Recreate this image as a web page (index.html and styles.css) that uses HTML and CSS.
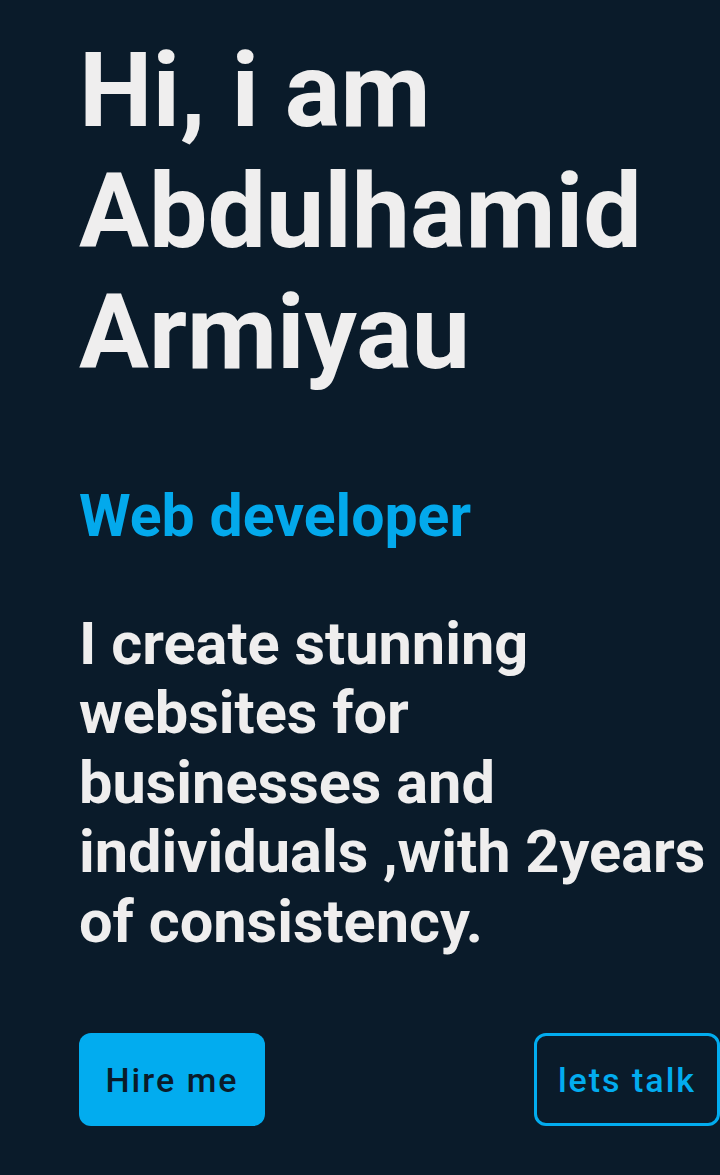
FILE: index.html
```html
<!DOCTYPE html>
<html lang="en">
<head>
<meta charset="utf-8">
<title>Abdulhamid Armiyau</title>
<link rel="stylesheet" href="styles.css">
</head>
<body>
<main class="hero">
  <h1 class="hero-title">Hi, i am Abdulhamid Armiyau</h1>
  <h2 class="hero-role">Web developer</h2>
  <p class="hero-text">I create stunning websites for businesses and individuals ,with 2years of consistency.</p>
  <div class="hero-actions">
    <a class="btn btn-primary" href="#">Hire me</a>
    <a class="btn btn-outline" href="#">lets talk</a>
  </div>
</main>
</body>
</html>
```
FILE: styles.css
```css
html, body {
  margin: 0;
  padding: 0;
  background: #0a1b2a;
}
body {
  font-family: Roboto, "Liberation Sans", sans-serif;
  color: #efeeee;
  overflow: hidden;
}
.hero {
  padding: 30px 0 40px 79px;
  min-height: 1175px;
  box-sizing: border-box;
}
.hero-title {
  margin: 0;
  font-size: 104px;
  line-height: 121px;
  font-weight: 700;
  width: 620px;
}
.hero-role {
  margin: 88px 0 0;
  font-size: 59px;
  line-height: 1.2;
  font-weight: 700;
  color: #03a9ec;
}
.hero-text {
  margin: 58px 0 0;
  font-size: 59.5px;
  line-height: 69.5px;
  font-weight: 700;
  width: 636px;
}
.hero-actions {
  margin-top: 76px;
  display: flex;
  justify-content: space-between;
  align-items: center;
}
.btn {
  box-sizing: border-box;
  width: 186px;
  height: 93px;
  border-radius: 12px;
  display: flex;
  align-items: center;
  justify-content: center;
  font-size: 34px;
  font-weight: 500;
  letter-spacing: 2px;
  text-decoration: none;
}
.btn-primary {
  background: #02acef;
  color: #0a1b2a;
}
.btn-outline {
  border: 3px solid #02acef;
  color: #02acef;
  background: transparent;
}
```
